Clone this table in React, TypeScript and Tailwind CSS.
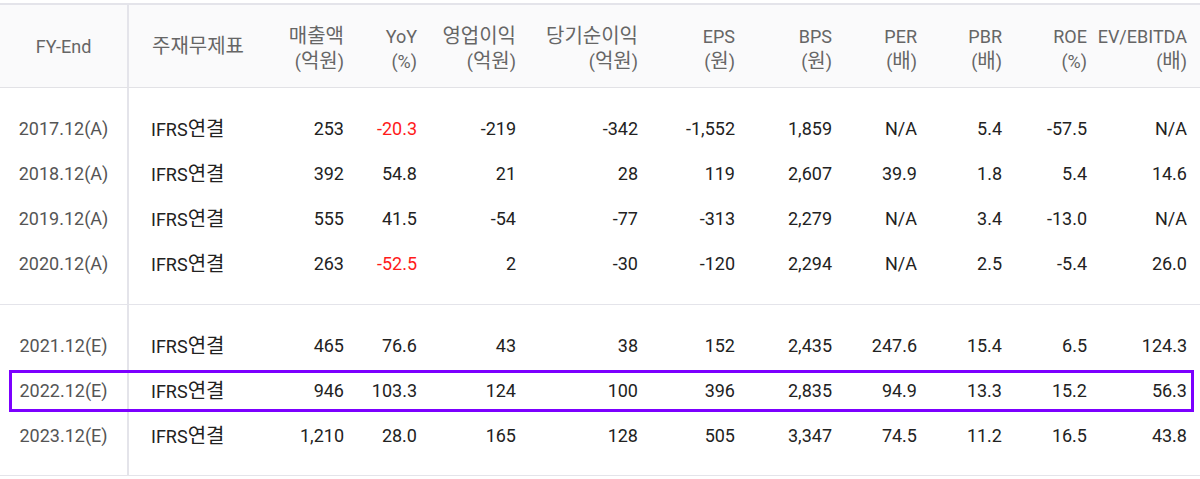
const cols = ["w-[129px]", "w-[131px]", "w-[84px]", "w-[73px]", "w-[99px]", "w-[122px]", "w-[97px]", "w-[97px]", "w-[85px]", "w-[85px]", "w-[85px]", "w-[100px]"]

// Korean glyphs render a bit larger in the original, so bump them separately
function K({ children }: { children: React.ReactNode }) {
  return <span className="text-[20px]">{children}</span>
}

const headers: [React.ReactNode, React.ReactNode, string][] = [
  [<K>매출액</K>, <>(<K>억원</K>)</>, "sales"],
  ["YoY", "(%)", "yoy"],
  [<K>영업이익</K>, <>(<K>억원</K>)</>, "op"],
  [<K>당기순이익</K>, <>(<K>억원</K>)</>, "net"],
  ["EPS", <>(<K>원</K>)</>, "eps"],
  ["BPS", <>(<K>원</K>)</>, "bps"],
  ["PER", <>(<K>배</K>)</>, "per"],
  ["PBR", <>(<K>배</K>)</>, "pbr"],
  ["ROE", "(%)", "roe"],
  ["EV/EBITDA", <>(<K>배</K>)</>, "ev"],
]

type Row = { year: string; values: string[]; highlight?: boolean }

const actual: Row[] = [
  { year: "2017.12(A)", values: ["253", "-20.3", "-219", "-342", "-1,552", "1,859", "N/A", "5.4", "-57.5", "N/A"] },
  { year: "2018.12(A)", values: ["392", "54.8", "21", "28", "119", "2,607", "39.9", "1.8", "5.4", "14.6"] },
  { year: "2019.12(A)", values: ["555", "41.5", "-54", "-77", "-313", "2,279", "N/A", "3.4", "-13.0", "N/A"] },
  { year: "2020.12(A)", values: ["263", "-52.5", "2", "-30", "-120", "2,294", "N/A", "2.5", "-5.4", "26.0"] },
]

const estimate: Row[] = [
  { year: "2021.12(E)", values: ["465", "76.6", "43", "38", "152", "2,435", "247.6", "15.4", "6.5", "124.3"] },
  { year: "2022.12(E)", values: ["946", "103.3", "124", "100", "396", "2,835", "94.9", "13.3", "15.2", "56.3"], highlight: true },
  { year: "2023.12(E)", values: ["1,210", "28.0", "165", "128", "505", "3,347", "74.5", "11.2", "16.5", "43.8"] },
]

function DataRow({ row }: { row: Row }) {
  return (
    <div className="relative flex h-[45px] items-center">
      <div className={`${cols[0]} flex h-full items-center justify-center border-r-2 border-[#e4e4ea] text-[#555]`}>{row.year}</div>
      <div className={`${cols[1]} pl-[22px] text-[#222]`}>
        IFRS<K>연결</K>
      </div>
      {row.values.map((v, i) => (
        <div
          key={i}
          className={`${cols[i + 2]} text-right ${i === 1 && v.startsWith("-") ? "text-[#ff1a1a]" : "text-[#222]"}`}
        >
          {v}
        </div>
      ))}
      {row.highlight && (
        <div className="pointer-events-none absolute top-[2px] left-[9px] h-[42px] w-[1185px] border-[3px] border-[#7c00ff]" />
      )}
    </div>
  )
}

function Section({ rows, top, bottom }: { rows: Row[]; top: string; bottom: string }) {
  return (
    <div className="border-b border-[#e4e4ea]">
      <div className={`flex ${top}`}>
        <div className={`${cols[0]} border-r-2 border-[#e4e4ea]`} />
      </div>
      {rows.map((r) => (
        <DataRow key={r.year} row={r} />
      ))}
      <div className={`flex ${bottom}`}>
        <div className={`${cols[0]} border-r-2 border-[#e4e4ea]`} />
      </div>
    </div>
  )
}

export default function App() {
  return (
    <div className="h-[479px] w-[1200px] bg-white pt-[3px] text-[18px] font-['Roboto','Noto_Sans_CJK_KR',sans-serif]">
      <div className="border-t-2 border-[#e4e4ea]">
        <div className="flex h-[83px] border-b border-[#e2e2e6] bg-[#fafafb] text-[#666]">
          <div className={`${cols[0]} flex items-center justify-center border-r-2 border-[#e4e4ea]`}>FY-End</div>
          <div className={`${cols[1]} flex items-center pl-[23px]`}>
            <K>주재무제표</K>
          </div>
          {headers.map(([a, b, key], i) => (
            <div key={key} className={`${cols[i + 2]} flex flex-col justify-center pt-[5px] text-right leading-[25px]`}>
              <span>{a}</span>
              <span>{b}</span>
            </div>
          ))}
        </div>
        <Section rows={actual} top="h-[18px]" bottom="h-[18px]" />
        <Section rows={estimate} top="h-[18px]" bottom="h-[17px]" />
      </div>
    </div>
  )
}
